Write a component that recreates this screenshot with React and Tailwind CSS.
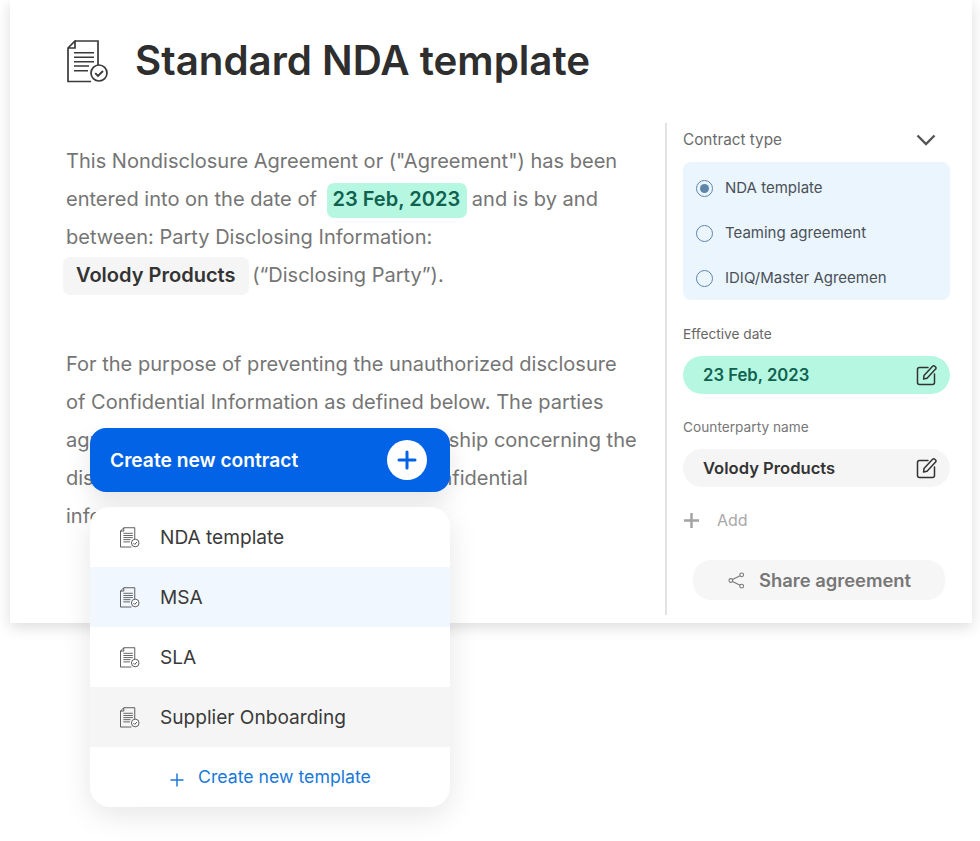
import React from 'react';

const DocIcon = ({ className }) => (
  <svg viewBox="0 0 42 43" fill="none" className={className}>
    <path d="M8 1H31V25M24 41.5H1V8L8 1V8H1" stroke="#3a3a3a" strokeWidth="1.7" />
    <path d="M7 12.7H27M7 17.3H27M7 21.7H27M7 26H22M7 30.7H21" stroke="#3a3a3a" strokeWidth="1.6" />
    <circle cx="32" cy="33" r="8" fill="#fff" stroke="#3a3a3a" strokeWidth="1.7" />
    <path d="M28.2 33.2L31 36L36 31" stroke="#3a3a3a" strokeWidth="1.9" />
  </svg>
);

const EditIcon = () => (
  <svg viewBox="0 0 22 22" fill="none" className="w-[22px] h-[22px]">
    <path d="M12 3.5H3.5C2.4 3.5 1.5 4.4 1.5 5.5V18.5C1.5 19.6 2.4 20.5 3.5 20.5H16.5C17.6 20.5 18.5 19.6 18.5 18.5V10" stroke="#333" strokeWidth="1.5" strokeLinecap="round" />
    <path d="M8 11.5L16.6 2.2C17.2 1.6 18.1 1.6 18.8 2.2L19.6 3C20.2 3.6 20.2 4.5 19.6 5.1L11 14.2L7.6 15L8 11.5Z" fill="#fff" fillOpacity="0" stroke="#333" strokeWidth="1.5" strokeLinejoin="round" />
  </svg>
);

const Radio = ({ label, checked }) => (
  <div className="h-[45px] flex items-center">
    <span className="w-[17px] h-[17px] ml-[13px] rounded-full border-[1.5px] border-[#5f86a8] flex items-center justify-center">
      {checked && <span className="w-[9px] h-[9px] rounded-full bg-[#5f86a8]" />}
    </span>
    <span className="ml-[12px] text-[15px] text-[#4b5057]">{label}</span>
  </div>
);

const templates = [
  { name: 'NDA template', bg: 'bg-white' },
  { name: 'MSA', bg: 'bg-[#f1f7fe]' },
  { name: 'SLA', bg: 'bg-white' },
  { name: 'Supplier Onboarding', bg: 'bg-[#f5f5f5]' },
];

const CreateMenu = () => (
  <div className="absolute left-[90px] top-[428px] w-[360px]">
    <div className="h-[64px] rounded-[16px] bg-[#0363e6] flex items-center justify-between pl-[20px] pr-[23px] shadow-[0_10px_24px_rgba(0,0,0,0.10)]">
      <span className="text-[19.2px] font-semibold text-white">Create new contract</span>
      <span className="w-[40px] h-[40px] rounded-full bg-white flex items-center justify-center">
        <svg viewBox="0 0 20 20" className="w-[20px] h-[20px]" fill="none">
          <path d="M10 2V18M2 10H18" stroke="#0363e6" strokeWidth="3" strokeLinecap="round" />
        </svg>
      </span>
    </div>
    <div className="mt-[15px] rounded-[20px] bg-white overflow-hidden shadow-[0_8px_30px_rgba(0,0,0,0.10)]">
      {templates.map((t) => (
        <div key={t.name} className={`h-[60px] flex items-center pl-[30px] ${t.bg}`}>
          <DocIcon className="w-[20px] h-[21px]" />
          <span className="ml-[20px] text-[19.1px] leading-[24px] text-[#3a3a3a]">{t.name}</span>
        </div>
      ))}
      <div className="h-[60px] flex items-center pl-[80px]">
        <svg viewBox="0 0 14 14" className="w-[14px] h-[14px] mt-[6px]" fill="none">
          <path d="M7 0.5V13.5M0.5 7H13.5" stroke="#1a78d8" strokeWidth="1.5" />
        </svg>
        <span className="ml-[14px] text-[17.7px] text-[#1a78d8]">Create new template</span>
      </div>
    </div>
  </div>
);

export default function App() {
  return (
    <div className="relative h-[841px] w-[980px] bg-white font-['Inter',sans-serif] overflow-hidden">
      <div className="ml-[10px] w-[962px] h-[623px] bg-white shadow-[0_4px_14px_rgba(0,0,0,0.14)] flex flex-col">
        <div className="flex items-center h-[123px] pl-[57px]">
          <DocIcon className="w-[42px] h-[43px]" />
          <h1 className="ml-[26px] text-[40.3px] font-semibold text-[#2e2e2e]">Standard NDA template</h1>
        </div>
        <div className="flex flex-1 pb-[8px]">
          <div className="w-[655px] pl-[56px] pt-[19px] text-[20.05px] leading-[38px] text-[#757575] whitespace-nowrap">
            <p>
              This Nondisclosure Agreement or ("Agreement") has been<br />
              entered into on the date of{' '}
              <span className="inline-block h-[35px] leading-[33px] ml-[5px] -mr-[1px] pl-[5px] pr-[7px] rounded-[7px] bg-[#b6f7e2] font-semibold text-[#10624f]">23 Feb, 2023</span>{' '}
              and is by and<br />
              between: Party Disclosing Information:<br />
              <span className="inline-block h-[38px] leading-[37px] -ml-[3px] -mr-[2px] px-[13px] rounded-[7px] bg-[#f5f5f5] font-semibold text-[#333]">Volody Products</span>{' '}
              (“Disclosing Party”).
            </p>
            <p className="mt-[50px]">
              For the purpose of preventing the unauthorized disclosure<br />
              of Confidential Information as defined below. The parties<br />
              agree to enter into a confidential relationship concerning the<br />
              disclosure of certain proprietary and confidential<br />
              information.
            </p>
          </div>
          <div className="w-[285px] border-l-2 border-[#e3e3e3] pl-[16px] pt-[7px]">
            <div className="flex items-center justify-between h-[20px] pr-[14px]">
              <span className="text-[15.3px] text-[#6b6b6b]">Contract type</span>
              <svg viewBox="0 0 20 12" className="w-[20px] h-[12px]" fill="none">
                <path d="M1.5 1.5L10 10L18.5 1.5" stroke="#555" strokeWidth="2.4" />
              </svg>
            </div>
            <div className="mt-[12px] w-[267px] h-[138px] pt-[4px] rounded-[8px] bg-[#eaf5fe]">
              <Radio label="NDA template" checked />
              <Radio label="Teaming agreement" />
              <Radio label="IDIQ/Master Agreemen" />
            </div>
            <div className="mt-[25px] h-[18px] leading-[18px] text-[13.7px] text-[#666]">Effective date</div>
            <div className="mt-[13px] w-[267px] h-[38px] rounded-[19px] bg-[#b6f7e2] flex items-center justify-between pl-[20px] pr-[12px]">
              <span className="text-[16.7px] font-semibold text-[#10624f] mt-[2px]">23 Feb, 2023</span>
              <EditIcon />
            </div>
            <div className="mt-[24px] h-[18px] leading-[18px] text-[13.7px] text-[#777]">Counterparty name</div>
            <div className="mt-[13px] w-[267px] h-[38px] rounded-[19px] bg-[#f5f5f5] flex items-center justify-between pl-[20px] pr-[12px]">
              <span className="text-[16.6px] font-semibold text-[#333] mt-[1px]">Volody Products</span>
              <EditIcon />
            </div>
            <div className="mt-[23px] h-[20px] flex items-center">
              <svg viewBox="0 0 18 18" className="w-[17px] h-[17px]" fill="none">
                <path d="M9 1V17M1 9H17" stroke="#a3a3a3" strokeWidth="2.6" />
              </svg>
              <span className="ml-[17px] text-[16px] text-[#a8a8a8]">Add</span>
            </div>
            <div className="mt-[30px] ml-[10px] w-[252px] h-[40px] rounded-[18px] bg-[#f6f6f6] flex items-center pl-[35px]">
              <svg viewBox="0 0 18 18" className="w-[17px] h-[17px]" fill="none" stroke="#777" strokeWidth="1.1">
                <circle cx="14.5" cy="3" r="2" />
                <circle cx="3" cy="9" r="2" />
                <circle cx="14.5" cy="15" r="2" />
                <path d="M4.8 8L12.8 4M4.8 10L12.8 14" />
              </svg>
              <span className="ml-[14px] text-[18.4px] font-semibold text-[#777] mt-[1px]">Share agreement</span>
            </div>
          </div>
        </div>
      </div>
      <CreateMenu />
    </div>
  );
}
